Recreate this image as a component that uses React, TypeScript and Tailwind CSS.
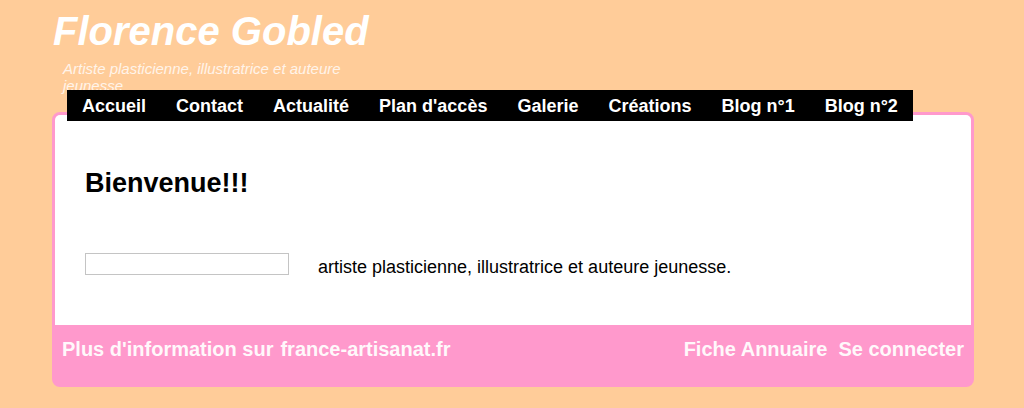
const navItems = ['Accueil', 'Contact', 'Actualité', "Plan d'accès", 'Galerie', 'Créations', 'Blog n°1', 'Blog n°2']

export default function App() {
  return (
    <div className="h-[408px] w-[1024px] overflow-hidden bg-[#ffcc99] font-['Liberation_Sans',Arial,sans-serif]">
      <div className="pl-[52px] pt-[8px]">
        {/* Header */}
        <h1 className="pl-px text-[40px] leading-[46px] font-bold italic text-white">Florence Gobled</h1>
        <div className="mt-[6px] ml-[11px] h-[30px] w-[290px] text-[15px] leading-[17px] italic text-[#fff4ea]">
          Artiste plasticienne, illustratrice et auteure jeunesse
        </div>

        {/* Menu */}
        <nav className="relative z-10 ml-[15px] flex h-[31px] w-fit items-center bg-black">
          {navItems.map((item) => (
            <a key={item} className="px-[15px] pt-px text-[18px] leading-[21px] font-bold text-white">
              {item}
            </a>
          ))}
        </nav>

        {/* Content card */}
        <div className="-mt-[9px] w-[922px] overflow-hidden rounded-lg border-[3px] border-[#ff99cc] bg-[#ff99cc]">
          <div className="h-[210px] bg-white px-[30px] pt-[53px]">
            <h2 className="text-[27px] leading-[31px] font-bold text-black">Bienvenue!!!</h2>
            <div className="mt-[54px] flex items-start">
              <div className="h-[22px] w-[204px] border border-[#c4c4c4] bg-white" />
              <p className="ml-[29px] mt-[4px] text-[18px] leading-[21px] text-black">
                artiste plasticienne, illustratrice et auteure jeunesse.
              </p>
            </div>
          </div>
          <div className="flex h-[59px] items-start justify-between px-[7px] pt-[13px] text-[20px] leading-[23px] font-bold text-[#fff8fb]">
            <div className="flex gap-[7px]">
              <span>Plus d'information sur</span>
              <a>france-artisanat.fr</a>
            </div>
            <div className="flex gap-[11px]">
              <a>Fiche Annuaire</a>
              <a>Se connecter</a>
            </div>
          </div>
        </div>
      </div>
    </div>
  )
}
